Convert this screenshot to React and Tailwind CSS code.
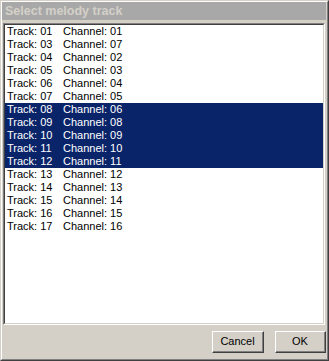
import React from "react";

const rows = [
  ["01", "01"],
  ["03", "07"],
  ["04", "02"],
  ["05", "03"],
  ["06", "04"],
  ["07", "05"],
  ["08", "06", true],
  ["09", "08", true],
  ["10", "09", true],
  ["11", "10", true],
  ["12", "11", true],
  ["13", "12"],
  ["14", "13"],
  ["15", "14"],
  ["16", "15"],
  ["17", "16"],
];

const Button = ({ label, width }) => (
  <div className={`border-t border-l border-t-white border-l-white border-r border-b border-r-[#404040] border-b-[#404040] ${width}`}>
    <div className="h-[20px] border-r border-b border-r-[#808080] border-b-[#808080] flex items-center justify-center text-[11px] text-black">
      {label}
    </div>
  </div>
);

const App = () => {
  return (
    <div
      className="w-[329px] h-[361px] bg-[#d4d0c8] border-t border-l border-t-[#d4d0c8] border-l-[#d4d0c8] border-r border-b border-r-[#404040] border-b-[#404040]"
      style={{ fontFamily: '"Liberation Sans", Arial, sans-serif' }}
    >
      <div className="h-full border-t border-l border-t-white border-l-white border-r border-b border-r-[#808080] border-b-[#808080] flex flex-col">
        {/* Title bar (inactive) */}
        <div className="h-[18px] mr-[1px] bg-[#a8a8a8] flex items-center pl-[3px]">
          <span className="text-[12.5px] font-bold text-[#d4d0c8] leading-none">Select melody track</span>
        </div>

        {/* Track list */}
        <div className="mt-[3px] ml-[1px] mr-[2px] h-[302px] border-t border-l border-t-[#808080] border-l-[#808080] border-r border-b border-r-white border-b-white">
          <div className="h-full bg-white border-t border-l border-t-[#404040] border-l-[#404040] border-r border-b border-r-[#d4d0c8] border-b-[#d4d0c8]">
            {rows.map(([track, channel, selected]) => (
              <div
                key={track}
                className={`flex h-[13px] leading-[13px] text-[11px] pl-[2px] ${selected ? "bg-[#0a246a] text-white" : "text-black"}`}
              >
                <span className="w-[56px]">Track: {track}</span>
                <span>Channel: {channel}</span>
              </div>
            ))}
          </div>
        </div>

        {/* Buttons */}
        <div className="flex justify-end gap-[11px] mt-[6px] mr-[1px]">
          <Button label="Cancel" width="w-[52px]" />
          <Button label="OK" width="w-[51px]" />
        </div>
      </div>
    </div>
  );
};

export default App;
